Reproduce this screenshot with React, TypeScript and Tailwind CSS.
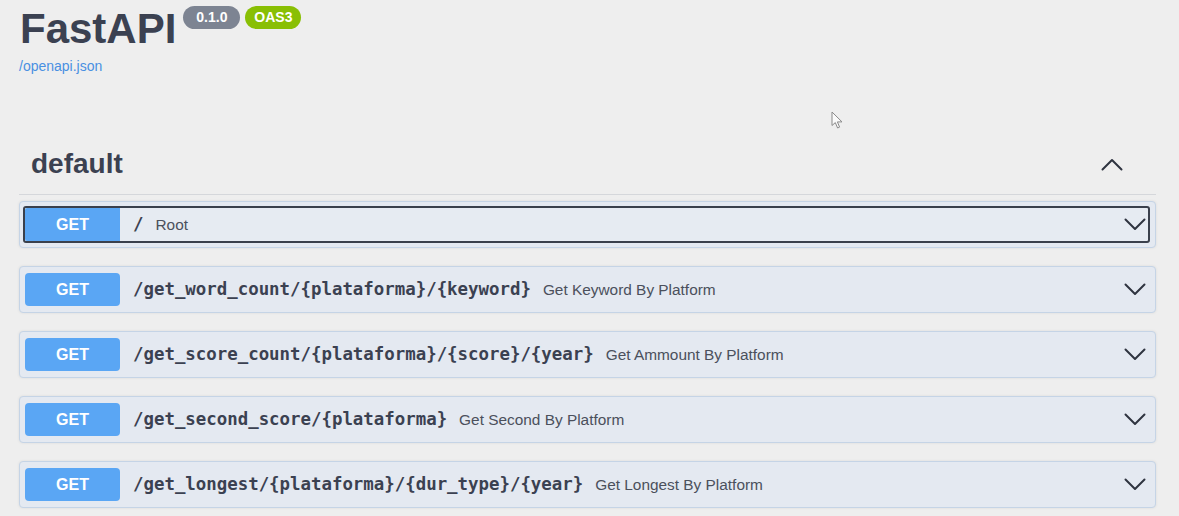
import React from "react";

type Op = { path: string; summary: string };

const ops: Op[] = [
  { path: "/get_word_count/{plataforma}/{keyword}", summary: "Get Keyword By Platform" },
  { path: "/get_score_count/{plataforma}/{score}/{year}", summary: "Get Ammount By Platform" },
  { path: "/get_second_score/{plataforma}", summary: "Get Second By Platform" },
  { path: "/get_longest/{plataforma}/{dur_type}/{year}", summary: "Get Longest By Platform" },
];

function Chevron({ up = false }: { up?: boolean }) {
  return (
    <svg width="22" height="13" viewBox="0 0 22 13" fill="none" className="shrink-0">
      <path
        d={up ? "M1.5 11.5 L11 2 L20.5 11.5" : "M1.5 1.5 L11 11 L20.5 1.5"}
        stroke="#2f3440"
        strokeWidth="2"
        strokeLinecap="round"
        strokeLinejoin="round"
      />
    </svg>
  );
}

function GetBadge({ square = false }: { square?: boolean }) {
  return (
    <div
      className={
        square
          ? "w-[95px] h-[33px] shrink-0 bg-[#5aa6f4] text-white text-[16px] font-bold flex items-center justify-center rounded-l-[2px]"
          : "w-[95px] h-[33px] shrink-0 bg-[#5aa6f4] text-white text-[16px] font-bold flex items-center justify-center rounded-[4px]"
      }
    >
      GET
    </div>
  );
}

function Path({ children }: { children: React.ReactNode }) {
  return (
    <span className="ml-[13px] font-['DejaVu_Sans_Mono',monospace] font-bold text-[17.4px] text-[#3b4151] whitespace-nowrap">
      {children}
    </span>
  );
}

function Summary({ children }: { children: React.ReactNode }) {
  return <span className="ml-[12px] text-[15.4px] text-[#4b505c] whitespace-nowrap">{children}</span>;
}

export default function App() {
  return (
    <div className="relative min-h-screen bg-[#eeeeee] font-['Liberation_Sans',Arial,sans-serif] overflow-hidden">
      <div className="w-[1156px] pl-[19px] pt-[6px]">
        <div className="flex items-start">
          <h2 className="mt-[2px] ml-[1px] text-[42px] leading-[42px] font-bold text-[#3b4151]">FastAPI</h2>
          <span className="ml-[7px] w-[57px] h-[23px] rounded-full bg-[#7d8492] text-white text-[14px] font-bold leading-[23px] text-center">
            0.1.0
          </span>
          <span className="ml-[5px] w-[56px] h-[23px] rounded-full bg-[#89bf04] text-white text-[14px] font-bold leading-[23px] text-center">
            OAS3
          </span>
        </div>
        <div className="mt-[8px] text-[14px] leading-[16px] text-[#4990e2]">/openapi.json</div>

        <div className="mt-[76px] flex items-center justify-between border-b border-[#d5d7db] pl-[12px] pr-[33px] pb-[16px]">
          <h3 className="text-[28px] leading-[28px] font-bold text-[#3b4151]">default</h3>
          <Chevron up />
        </div>

        <div className="mt-[6px] h-[47px] mb-[18px] flex items-center rounded-[4px] border border-[#c5d4e6] bg-[#e4e9f1] pl-[3px] pr-[5px] shadow-[0_0_3px_rgba(0,0,0,0.08)]">
          <div className="flex items-center h-[37px] w-full border-2 border-[#3a404c] rounded-[3px] bg-[#e6ebf2] pr-[2px]">
            <GetBadge square />
            <Path>/</Path>
            <Summary>Root</Summary>
            <div className="ml-auto">
              <Chevron />
            </div>
          </div>
        </div>

        {ops.map((op) => (
          <div
            key={op.path}
            className="h-[47px] mb-[18px] flex items-center rounded-[4px] border border-[#c5d4e6] bg-[#e4e9f1] pl-[5px] pr-[9px] shadow-[0_0_3px_rgba(0,0,0,0.08)]"
          >
            <GetBadge />
            <Path>{op.path}</Path>
            <Summary>{op.summary}</Summary>
            <div className="ml-auto">
              <Chevron />
            </div>
          </div>
        ))}
      </div>

      <svg className="absolute left-[831px] top-[111px]" width="13" height="19" viewBox="0 0 13 19">
        <path
          d="M1 1 L1 14.5 L4.3 11.6 L6.6 17 L8.6 16.1 L6.4 10.9 L11 10.9 Z"
          fill="#fafafa"
          stroke="#8a8a8a"
          strokeWidth="1"
          strokeLinejoin="round"
        />
      </svg>
    </div>
  );
}
